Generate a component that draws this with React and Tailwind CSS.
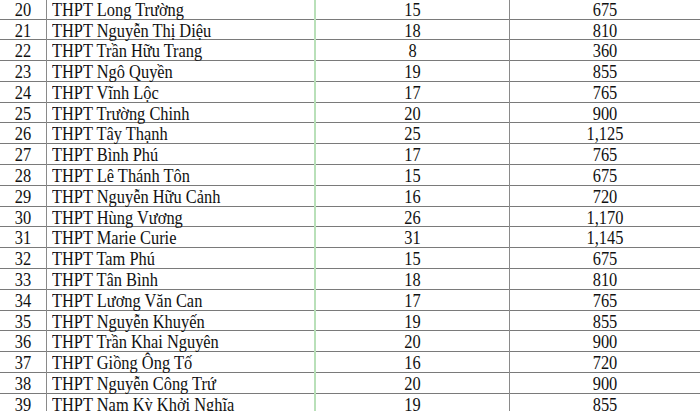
import React from "react";

const rows = [
    [20, "THPT Long Trường", "15", "675"],
    [21, "THPT Nguyễn Thị Diệu", "18", "810"],
    [22, "THPT Trần Hữu Trang", "8", "360"],
    [23, "THPT Ngô Quyền", "19", "855"],
    [24, "THPT Vĩnh Lộc", "17", "765"],
    [25, "THPT Trường Chinh", "20", "900"],
    [26, "THPT Tây Thạnh", "25", "1,125"],
    [27, "THPT Bình Phú", "17", "765"],
    [28, "THPT Lê Thánh Tôn", "15", "675"],
    [29, "THPT Nguyễn Hữu Cảnh", "16", "720"],
    [30, "THPT Hùng Vương", "26", "1,170"],
    [31, "THPT Marie Curie", "31", "1,145"],
    [32, "THPT Tam Phú", "15", "675"],
    [33, "THPT Tân Bình", "18", "810"],
    [34, "THPT Lương Văn Can", "17", "765"],
    [35, "THPT Nguyễn Khuyến", "19", "855"],
    [36, "THPT Trần Khai Nguyên", "20", "900"],
    [37, "THPT Giồng Ông Tố", "16", "720"],
    [38, "THPT Nguyễn Công Trứ", "20", "900"],
    [39, "THPT Nam Kỳ Khởi Nghĩa", "19", "855"],
];

// text in the sheet is a little taller than plain Times
const Txt = ({children}) => (
    <span className="inline-block scale-y-110 origin-bottom">{children}</span>
);

const App = () => {
    return (
        <div className="w-[700px] h-[411px] overflow-hidden bg-white">
            <div
                className="-mt-[1.3px] text-[16.4px] text-[#111]"
                style={{fontFamily: '"Liberation Serif", "Times New Roman", serif'}}
            >
                {rows.map(([no, name, count, total]) => (
                    <div
                        key={no}
                        className="grid grid-cols-[47px_269px_194px_1fr] h-[20.8px] border-b-[1.5px] border-[#7a7a7a] leading-[19px]"
                    >
                        <div className="pt-[2px] text-center border-r-[1.5px] border-[#8a8a8a]"><Txt>{no}</Txt></div>
                        <div className="pt-[2px] pl-[5px] border-r-2 border-[#b9e0b9] whitespace-nowrap"><Txt>{name}</Txt></div>
                        <div className="pt-[2px] text-center border-r-[1.5px] border-[#8a8a8a]"><Txt>{count}</Txt></div>
                        <div className="pt-[2px] text-center"><Txt>{total}</Txt></div>
                    </div>
                ))}
            </div>
        </div>
    );
};

export default App;
